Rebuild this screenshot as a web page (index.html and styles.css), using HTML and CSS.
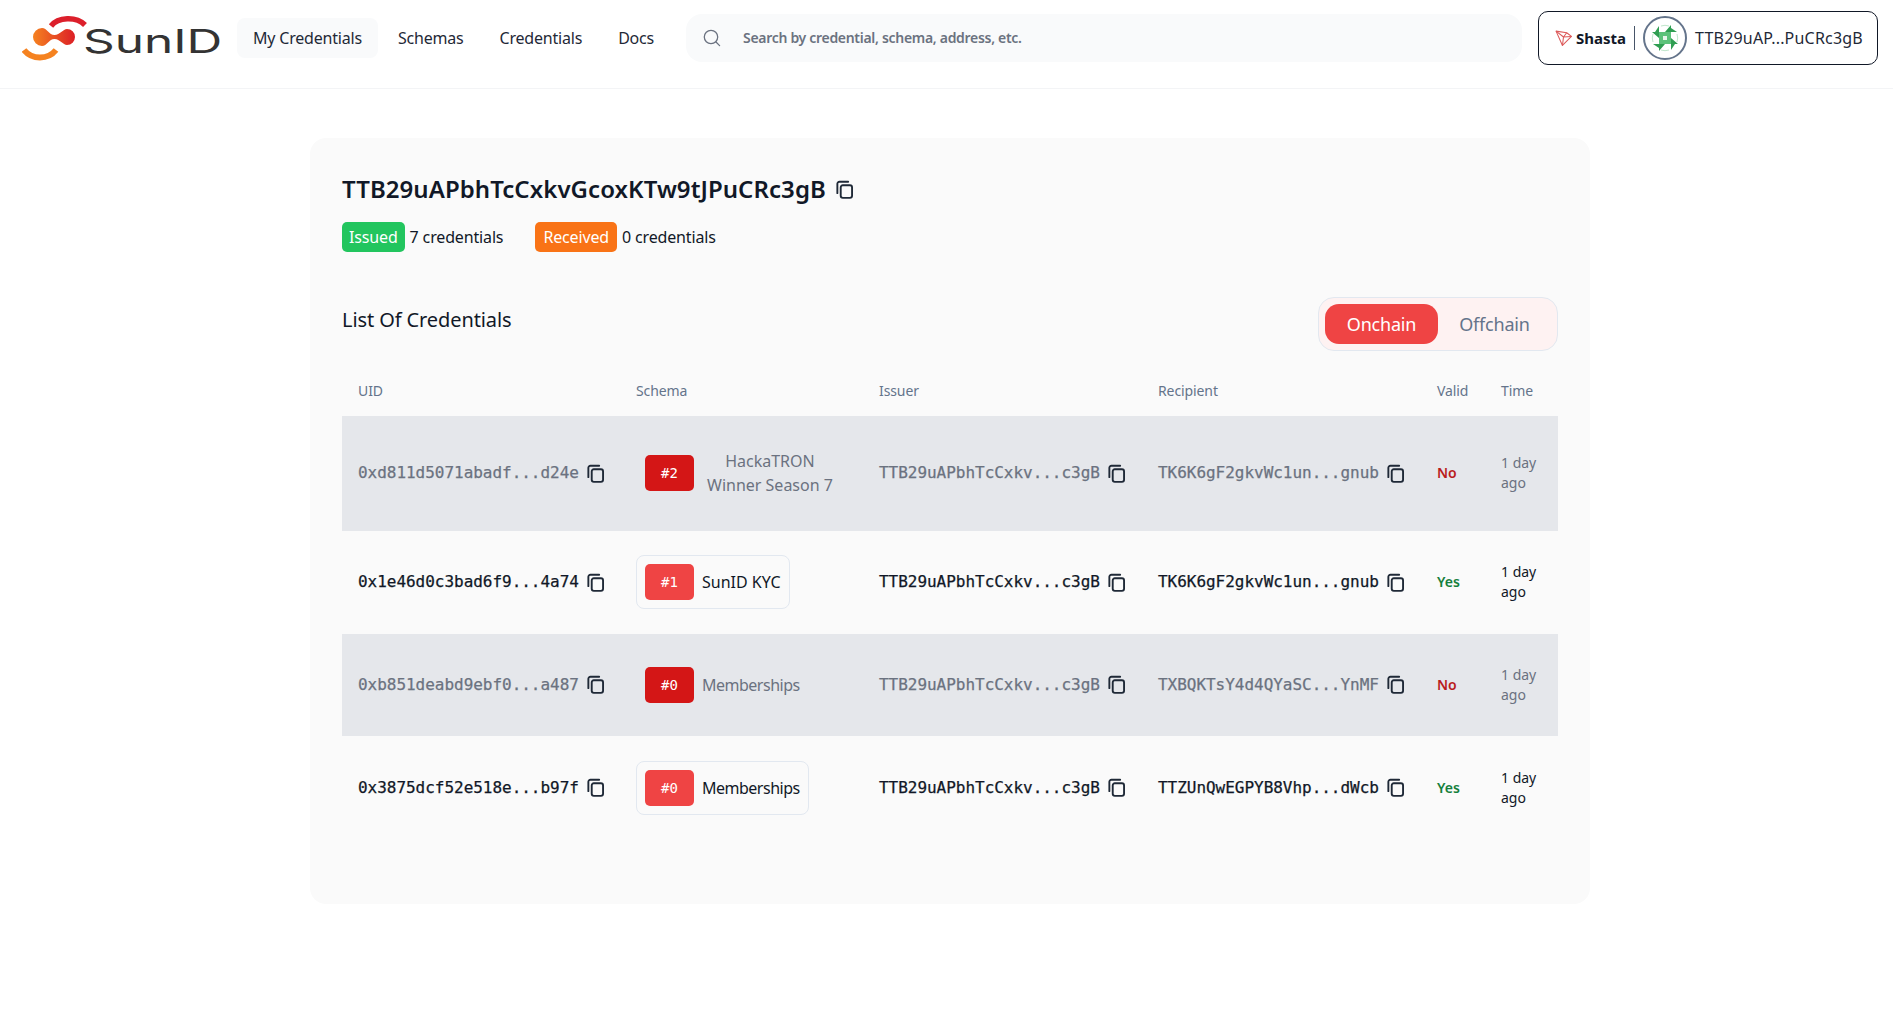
FILE: index.html
```html
<!DOCTYPE html>
<html lang="en">
<head>
<meta charset="utf-8">
<title>SunID</title>
<link rel="stylesheet" href="styles.css">
</head>
<body>
<svg class="defs" width="0" height="0">
  <defs>
    <symbol id="copy" viewBox="0 0 20 20">
      <path d="M3.2 13.5V4.600a2 2 0 0 1 2-2h8.300" fill="none" stroke="currentColor" stroke-width="1.800" stroke-linecap="round"/>
      <rect x="6.400" y="6" width="10.800" height="12" rx="2" fill="none" stroke="currentColor" stroke-width="1.800"/>
    </symbol>
    <linearGradient id="lg" x1="0" x2="1" y1="0" y2="0">
      <stop offset="0" stop-color="#f58220"/>
      <stop offset="1" stop-color="#dc1f26"/>
    </linearGradient>
  </defs>
</svg>
<header class="topbar">
  <a class="logo">
    <svg class="logo-mark" width="66" height="46" viewBox="0 0 66 46">
      <path d="M29 11C36 2 54 1 63 10" fill="none" stroke="#dc1f2b" stroke-width="5.500"/>
      <path d="M2 35C10 45 26 45 34 35" fill="none" stroke="#f58220" stroke-width="6"/>
      <path d="M11 22a9 9 0 0 1 9-9c5 0 7 7 12.500 7S41 14 45 14a8 8 0 0 1 0 16c-4 0-7-6-12.500-6S25 31 20 31a9 9 0 0 1-9-9z" fill="url(#lg)"/>
    </svg>
    <span class="logo-text">SunID</span>
  </a>
  <nav class="nav">
    <a class="nav-item nav-active">My Credentials</a>
    <a class="nav-item">Schemas</a>
    <a class="nav-item">Credentials</a>
    <a class="nav-item">Docs</a>
  </nav>
  <div class="search">
    <svg width="20" height="20" viewBox="0 0 20 20" fill="none" stroke="#6b7280" stroke-width="1.300"><circle cx="9" cy="9" r="6.700"/><path d="M14 14l3.600 3.600" stroke-linecap="round"/></svg>
    <span class="search-text">Search by credential, schema, address, etc.</span>
  </div>
  <div class="wallet">
    <svg width="17" height="17" viewBox="0 0 16 16" fill="none" stroke="#dc5a5a" stroke-width="1" stroke-linejoin="round"><path d="M1 2l10 1.500L15.500 7 7 15.500z"/><path d="M1 2l7 5.500L7 15.500M11 3.500L8 7.500 15.500 7"/></svg>
    <span class="net">Shasta</span>
    <span class="divider"></span>
    <span class="avatar">
      <svg width="32" height="32" viewBox="0 0 32 32">
        <rect x="10" y="10" width="12" height="12" fill="#5cc27a"/>
        <rect x="14" y="14" width="4" height="4" fill="#e8f6ec"/>
        <path d="M3 10h7v6zM29 22h-7v-6zM22 3v7h-6zM10 29v-7h6z" fill="#2f9e52"/>
        <path d="M10 10L6 10 10 4zM22 22h4l-4 6zM22 10V6l6 4zM10 22v4l-6-4z" fill="#2f9e52"/>
        <path d="M4 20a12 12 0 0 1 0-8M28 12a12 12 0 0 1 0 8M12 4a12 12 0 0 1 8 0M20 28a12 12 0 0 1-8 0" stroke="#bfe6cb" fill="none"/>
      </svg>
    </span>
    <span class="addr">TTB29uAP...PuCRc3gB</span>
  </div>
</header>
<main class="page">
  <section class="card">
    <h1 class="title">TTB29uAPbhTcCxkvGcoxKTw9tJPuCRc3gB <svg class="icon icon-title"><use href="#copy"/></svg></h1>
    <div class="stats">
      <span class="stat"><span class="pill pill-green">Issued</span> 7 credentials</span>
      <span class="stat"><span class="pill pill-orange">Received</span> 0 credentials</span>
    </div>
    <div class="list-head">
      <h2 class="list-title">List Of Credentials</h2>
      <div class="toggle">
        <span class="toggle-on">Onchain</span>
        <span class="toggle-off">Offchain</span>
      </div>
    </div>
    <table class="table">
      <colgroup><col class="c-uid"><col class="c-schema"><col class="c-addr"><col class="c-addr"><col class="c-valid"><col></colgroup>
      <thead>
        <tr><th>UID</th><th>Schema</th><th>Issuer</th><th>Recipient</th><th>Valid</th><th>Time</th></tr>
      </thead>
      <tbody>
        <tr class="revoked">
          <td><span class="mono">0xd811d5071abadf...d24e<svg class="icon"><use href="#copy"/></svg></span></td>
          <td><span class="chip chip-plain"><span class="num num-dark">#2</span><span class="name name-center">HackaTRON<br>Winner Season 7</span></span></td>
          <td><span class="mono">TTB29uAPbhTcCxkv...c3gB<svg class="icon"><use href="#copy"/></svg></span></td>
          <td><span class="mono">TK6K6gF2gkvWc1un...gnub<svg class="icon"><use href="#copy"/></svg></span></td>
          <td class="no">No</td>
          <td class="time">1 day ago</td>
        </tr>
        <tr>
          <td><span class="mono">0x1e46d0c3bad6f9...4a74<svg class="icon"><use href="#copy"/></svg></span></td>
          <td><span class="chip"><span class="num">#1</span><span class="name">SunID KYC</span></span></td>
          <td><span class="mono">TTB29uAPbhTcCxkv...c3gB<svg class="icon"><use href="#copy"/></svg></span></td>
          <td><span class="mono">TK6K6gF2gkvWc1un...gnub<svg class="icon"><use href="#copy"/></svg></span></td>
          <td class="yes">Yes</td>
          <td class="time">1 day ago</td>
        </tr>
        <tr class="revoked">
          <td><span class="mono">0xb851deabd9ebf0...a487<svg class="icon"><use href="#copy"/></svg></span></td>
          <td><span class="chip chip-plain"><span class="num num-dark">#0</span><span class="name name-tight">Memberships</span></span></td>
          <td><span class="mono">TTB29uAPbhTcCxkv...c3gB<svg class="icon"><use href="#copy"/></svg></span></td>
          <td><span class="mono">TXBQKTsY4d4QYaSC...YnMF<svg class="icon"><use href="#copy"/></svg></span></td>
          <td class="no">No</td>
          <td class="time">1 day ago</td>
        </tr>
        <tr>
          <td><span class="mono">0x3875dcf52e518e...b97f<svg class="icon"><use href="#copy"/></svg></span></td>
          <td><span class="chip"><span class="num">#0</span><span class="name name-tight">Memberships</span></span></td>
          <td><span class="mono">TTB29uAPbhTcCxkv...c3gB<svg class="icon"><use href="#copy"/></svg></span></td>
          <td><span class="mono">TTZUnQwEGPYB8Vhp...dWcb<svg class="icon"><use href="#copy"/></svg></span></td>
          <td class="yes">Yes</td>
          <td class="time">1 day ago</td>
        </tr>
      </tbody>
    </table>
  </section>
</main>
</body>
</html>
```
FILE: styles.css
```css
* { box-sizing: border-box; }
html, body { margin: 0; padding: 0; }
body {
  background: #fff;
  color: #111827;
  font-family: "Noto Sans", "Open Sans", sans-serif;
  font-size: 16px;
  line-height: 24px;
  height: 1030px;
  overflow: hidden;
}
.defs { position: absolute; }
.topbar {
  display: flex;
  align-items: center;
  height: 89px;
  padding: 0 15px 13px 22px;
  border-bottom: 1px solid #f3f4f6;
}
.logo { display: flex; align-items: center; width: 215px; flex: none; }
.logo-mark { flex: none; }
.logo-text {
  font-family: "Inter", sans-serif;
  font-weight: 400;
  font-size: 33px;
  line-height: 40px;
  color: #333;
  margin: 7px 0 0 -5px;
  transform: scaleX(1.5);
  transform-origin: left center;
}
.nav { display: flex; gap: 4px; flex: none; width: 449px; }
.nav-item { padding: 8px 16px; height: 40px; border-radius: 8px; color: #1f2937; letter-spacing: -0.2px; }
.nav-active { background: #f9fafb; }
.search {
  flex: none;
  width: 836px;
  height: 48px;
  display: flex;
  align-items: center;
  gap: 21px;
  padding-left: 16px;
  background: #f9fafb;
  border-radius: 16px;
}
.search-text { font-size: 14px; font-weight: 600; color: #6b7280; letter-spacing: -0.3px; }
.wallet {
  margin-left: 16px;
  flex: none;
  width: 340px;
  height: 54px;
  display: flex;
  align-items: center;
  padding-left: 16px;
  border: 1px solid #111827;
  border-radius: 10px;
}
.net { margin-left: 4px; font-weight: 700; font-size: 15px; }
.divider { width: 1px; height: 24px; background: #475569; margin: 0 8px; }
.avatar {
  width: 44px;
  height: 44px;
  border: 2px solid #64748b;
  border-radius: 50%;
  display: flex;
  align-items: center;
  justify-content: center;
}
.addr { margin-left: 8px; color: #1f2937; letter-spacing: 0.2px; }
.page { padding: 49px 0 0 7px; display: flex; justify-content: center; }
.card {
  width: 1280px;
  height: 766px;
  padding: 33px 32px 32px;
  background: #fafafa;
  border-radius: 16px;
}
.title { margin: 0; font-size: 24px; line-height: 36px; font-weight: 600; color: #111827; display: flex; align-items: center; gap: 8px; letter-spacing: 0.06px; }
.stats { display: flex; gap: 32px; margin-top: 15px; letter-spacing: -0.15px; }
.stat { display: flex; align-items: center; gap: 5px; }
.pill { height: 30px; padding: 3px 7px; border-radius: 5px; color: #fff; }
.pill-green { background: #22c55e; }
.pill-orange { background: #f97316; padding: 3px 8px; }
.list-head { display: flex; justify-content: space-between; margin-top: 45px; }
.list-title { margin: 9px 0 0; font-size: 20px; line-height: 28px; font-weight: 400; letter-spacing: -0.1px; }
.toggle {
  width: 240px;
  height: 54px;
  display: flex;
  align-items: center;
  padding: 6px;
  background: #fef2f2;
  border: 1px solid #e2e8f0;
  border-radius: 16px;
  font-size: 18px;
  letter-spacing: -0.2px;
}
.toggle-on { width: 113px; height: 40px; line-height: 40px; text-align: center; background: #ef4444; color: #fff; border-radius: 14px; }
.toggle-off { flex: 1; text-align: center; color: #64748b; }
.table { width: 1216px; margin-top: 17px; border-collapse: collapse; table-layout: fixed; }
.c-uid { width: 278px; }
.c-schema { width: 243px; }
.c-addr { width: 279px; }
.c-valid { width: 64px; }
.table th { height: 48px; padding: 11px 16px 13px; text-align: left; font-size: 14px; font-weight: 400; color: #64748b; letter-spacing: -0.1px; }
.table td { padding: 24.4px 16px; font-size: 14px; line-height: 20px; }
.table tr.revoked { background: #e5e7eb; }
.revoked td, .revoked .mono, .revoked .name { color: #6b7280; }
.mono {
  display: flex;
  align-items: center;
  font-family: "DejaVu Sans Mono", "Liberation Mono", monospace;
  font-size: 16px;
  letter-spacing: -0.03px;
  -webkit-text-stroke: 0.25px currentColor;
  color: #111827;
  white-space: nowrap;
}
.icon { width: 21px; height: 21px; margin-left: 6px; flex: none; color: #1f2937; }
.icon-title { margin: 0; }
.chip {
  display: inline-flex;
  align-items: center;
  gap: 8px;
  padding: 8px;
  border: 1px solid #e2e8f0;
  border-radius: 8px;
}
.chip-plain { border-color: transparent; }
.num { width: 49px; height: 36px; line-height: 36px; text-align: center; background: #ef4444; color: #fff; border-radius: 5px; font-family: "DejaVu Sans Mono", monospace; font-size: 14px; flex: none; }
.num-dark { background: #d41616; }
.revoked .num { color: #fff; }
.name { font-size: 16px; line-height: 24px; color: #111827; }
.name-center { text-align: center; margin-left: 5px; }
.name-tight { letter-spacing: -0.5px; }
.table td.no { font-weight: 600; color: #b91c1c; }
.table td.yes { font-weight: 600; color: #15803d; }
.time { color: #111827; }
.revoked .time { color: #6b7280; }
```
